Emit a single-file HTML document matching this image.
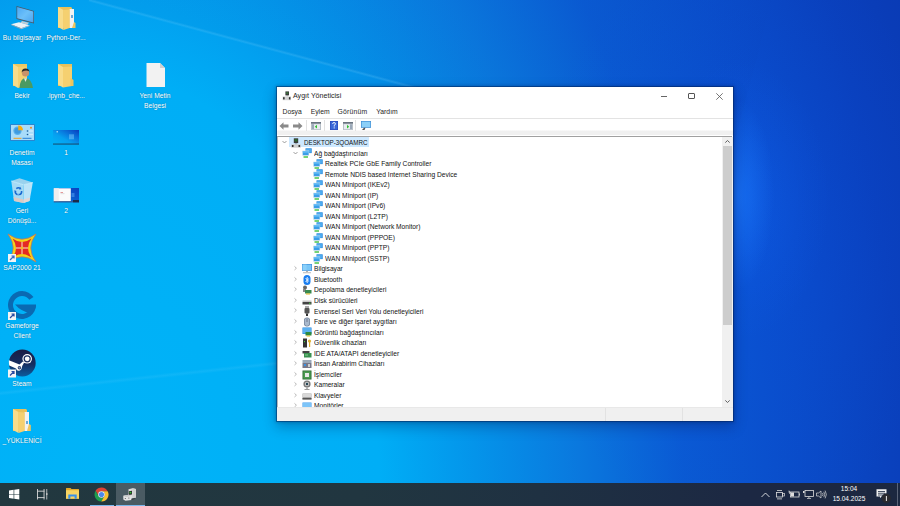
<!DOCTYPE html>
<html><head><meta charset="utf-8">
<style>
*{margin:0;padding:0;box-sizing:border-box}
html,body{width:900px;height:506px;overflow:hidden}
body{position:relative;font-family:"Liberation Sans",sans-serif;
background:
 radial-gradient(36px 95px at 738px 195px, rgba(30,125,255,.55), rgba(30,125,255,0)),
 radial-gradient(90px 140px at 740px 200px, rgba(20,110,255,.25), rgba(20,110,255,0)),
 radial-gradient(220px 300px at 740px 240px, rgba(10,80,240,.22), rgba(10,80,240,0)),
 radial-gradient(800px 1216px at 100px 500px, #00b4f8 0%, #00aef6 35%, #0494ea 47%, #0a78de 60%, #0a5ad2 73%, #0a4cc8 87.5%, #0a40bc 100%, #0a3ab4 110%);
}
#streak{position:absolute;left:89px;top:-400px;width:660px;height:400px;transform-origin:0 400px;transform:rotate(15.06deg);
background:linear-gradient(to top, rgba(0,30,110,.03) 0, rgba(0,30,110,.02) 80px, rgba(0,30,110,0) 200px)}
#streak2{position:absolute;left:89px;top:-2px;width:660px;height:4px;transform-origin:0 2px;transform:rotate(15.06deg);
background:linear-gradient(to bottom, rgba(130,215,255,0) 0, rgba(130,215,255,.2) 50%, rgba(130,215,255,0) 100%)}
#streak3{position:absolute;left:-10px;top:392px;width:300px;height:5px;transform-origin:0 2.5px;transform:rotate(-6.2deg);
background:linear-gradient(to bottom, rgba(160,225,255,0) 0, rgba(160,225,255,.09) 50%, rgba(160,225,255,0) 100%)}
.abs{position:absolute}
svg.abs{overflow:visible}
.lbl{position:absolute;color:#fff;font-size:6.7px;line-height:9.5px;text-align:center;white-space:nowrap;text-shadow:0 0 1.5px rgba(0,0,0,.35)}
.t{position:absolute;font-size:7.2px;color:#111;white-space:nowrap;line-height:11px;transform:scaleX(.925);transform-origin:0 0}
.m{position:absolute;font-size:6.8px;color:#1e1e1e;white-space:nowrap;line-height:10px}
#task{position:absolute;left:0;top:483px;width:900px;height:23px;background:linear-gradient(90deg,#22383f 0%,#213640 40%,#1f3142 60%,#1c2843 83%,#1c2840 100%)}
.tk{position:absolute;color:#fff;font-size:6.5px;line-height:8px;white-space:nowrap;text-align:center}
</style></head><body>

<div id="streak"></div><div id="streak2"></div><div id="streak3"></div>
<!-- ===== desktop icons ===== -->
<!-- Bu bilgisayar -->
<svg class="abs" style="left:10px;top:5px" width="26" height="26" viewBox="0 0 26 26">
 <defs><linearGradient id="gm" x1="0" y1="0" x2="1" y2="1"><stop offset="0" stop-color="#4aa8f4"/><stop offset=".5" stop-color="#6cc0fa"/><stop offset="1" stop-color="#4aa4f0"/></linearGradient></defs>
 <path d="M6.5 1 L24 6 L24 18.5 L6.5 14 Z" fill="#4a5866"/>
 <path d="M7.2 1.9 L23.3 6.6 L23.3 17.6 L7.2 13.3 Z" fill="url(#gm)"/>
 <path d="M12 16 L19 17.8 L17.5 19.5 L10.5 17.8 Z" fill="#c0ccd6"/>
 <path d="M1 19.2 L9 17.2 L19.5 20.2 L11.2 23.2 Z" fill="#eef2f5"/>
 <path d="M1 19.2 L11.2 23.2 L11.2 24.2 L1 20.1 Z" fill="#9aa6b0"/>
 <path d="M11.2 23.2 L19.5 20.2 L19.5 21 L11.2 24.2 Z" fill="#b8c2ca"/>
</svg>
<!-- folder generic (Python-Der) -->
<svg class="abs" style="left:57px;top:6px" width="19" height="24" viewBox="0 0 19 24">
 <path d="M1 1 L14 1 L15 2 L15 22 L1 22 Z" fill="#e9c15a"/>
 <rect x="12.5" y="3" width="4.5" height="19" fill="#f2f2f2"/>
 <rect x="14" y="9" width="2" height="3" fill="#6aa8d8"/>
 <path d="M1 1 L6.5 4 L6.5 24 L1 21 Z" fill="#f8dc8a"/>
 <path d="M6.5 4 L12.5 3.5 L12.5 22 L6.5 24 Z" fill="#f5d070"/>
 <path d="M17 16 L18.5 17 L18.5 22 L15 22 Z" fill="#eec45e"/>
</svg>
<!-- Bekir folder with person -->
<svg class="abs" style="left:12px;top:63px" width="22" height="26" viewBox="0 0 22 26">
 <path d="M1 1 L15 1 L15 23 L1 23 Z" fill="#edc862"/>
 <path d="M1 1 L6 4 L6 25 L1 22 Z" fill="#f8dc8a"/>
 <path d="M6 4 L15 3.5 L15 23 L6 25 Z" fill="#f5d070"/>
 <circle cx="13.5" cy="10" r="3.6" fill="#c8926a"/>
 <path d="M9.6 9.5 Q10 5.3 13.5 5.5 Q17.5 5.6 17.4 9.3 L16.8 8 Q14 6.5 10.5 8.6 Z" fill="#2a2a2a"/>
 <path d="M7.5 25 Q8 15.5 13.5 15 Q19.5 15.5 21 25 Z" fill="#4a9a62"/>
 <path d="M12 15.2 L13.5 19 L15 15.2 Z" fill="#e8e8e8"/>
</svg>
<!-- .ipynb folder -->
<svg class="abs" style="left:57px;top:63px" width="17" height="25" viewBox="0 0 17 25">
 <path d="M1 1 L15 1 L15 23 L1 23 Z" fill="#e9c15a"/>
 <path d="M1 1 L6 4 L6 24.5 L1 21.5 Z" fill="#f8dc8a"/>
 <path d="M6 4 L15 3.5 L15 23 L6 24.5 Z" fill="#f5d070"/>
 <path d="M13.5 15 L16.5 17 L16.5 23 L13.5 23 Z" fill="#eec45e"/>
</svg>
<!-- Yeni Metin Belgesi page -->
<svg class="abs" style="left:146px;top:62px" width="20" height="26" viewBox="0 0 20 26">
 <path d="M0.5 1 L14 1 L19 6 L19 25 L0.5 25 Z" fill="#f2f2f2"/>
 <path d="M14 1 L14 6 L19 6 Z" fill="#d0d0d0"/>
</svg>
<!-- Denetim Masası -->
<svg class="abs" style="left:9.5px;top:124px" width="25" height="17" viewBox="0 0 25 17">
 <rect x="0" y="0" width="25" height="17" rx=".8" fill="#2a86d0"/>
 <rect x="1" y="1" width="23" height="15" fill="#a8dcfa"/>
 <circle cx="7.5" cy="6.8" r="4.2" fill="#58b0ec"/>
 <circle cx="7.5" cy="6.8" r="3" fill="#3e9ae0"/>
 <path d="M8.2 6.2 L8.2 1.4 A5 5 0 0 1 13 6.2 Z" fill="#f8ac10"/>
 <circle cx="21" cy="3.8" r="1" fill="#f08a20"/>
 <circle cx="17.5" cy="7" r=".8" fill="#1a5a98"/><rect x="19" y="6.3" width="4" height="1.4" fill="#d0ecfc"/>
 <circle cx="17.5" cy="10.5" r=".8" fill="#1a5a98"/><rect x="19" y="9.8" width="4" height="1.4" fill="#d0ecfc"/>
 <rect x="3.5" y="13.8" width="8" height="1" fill="#f0a020"/>
 <rect x="12.5" y="13.8" width="9" height="1" fill="#2a80d8"/>
</svg>
<!-- 1 thumbnail -->
<svg class="abs" style="left:53px;top:130px" width="26" height="15" viewBox="0 0 26 15">
 <defs><linearGradient id="g1" x1="0" y1="1" x2="1" y2="0"><stop offset="0" stop-color="#00b4f8"/><stop offset=".4" stop-color="#06a0f0"/><stop offset=".72" stop-color="#0a6cd8"/><stop offset="1" stop-color="#0a3cbc"/></linearGradient></defs>
 <rect x="0" y="0" width="26" height="14.3" fill="url(#g1)"/>
 <rect x="0" y="13.6" width="26" height=".9" fill="#1a3a58"/>
 <rect x="16" y="4.3" width="5" height="5" fill="#8ad0ff" opacity=".45"/>
 <rect x="3.5" y="1" width="1.5" height="1.5" fill="#cfefff" opacity=".7"/>
</svg>
<!-- Recycle bin -->
<svg class="abs" style="left:8px;top:175px" width="28" height="30" viewBox="0 0 28 30">
 <path d="M3.3 6 L11.5 3.3 L24.8 7.5 L15.5 9.8 Z" fill="#9ad2ee"/>
 <path d="M3.3 6 L15.5 9.8 L15.5 28 L6 26 Z" fill="#a6daf4"/>
 <path d="M15.5 9.8 L24.8 7.5 L21.5 26 L15.5 28 Z" fill="#bce4f8"/>
 <path d="M3.3 6 L15.5 9.8 L24.8 7.5" stroke="#d8f2fc" stroke-width=".7" fill="none"/>
 <path d="M5.5 22 L15.5 24.5 L15.5 28 L6 26 Z" fill="#dccac4"/>
 <path d="M15.5 24.5 L22.2 22.5 L21.5 26 L15.5 28 Z" fill="#e4d6d2"/>
 <g stroke="#1a6ad0" stroke-width="1.5" fill="none">
  <path d="M8.3 13.6 A3.4 3.4 0 0 1 12.2 13.4"/>
  <path d="M13.6 16 A3.4 3.4 0 0 1 11.6 19.6"/>
  <path d="M9.6 19.8 A3.4 3.4 0 0 1 7.2 16.6"/>
 </g>
 <path d="M12 11.8 L13.6 14.2 L11 14.6 Z M12.8 19.8 L10.2 20.6 L10.8 18.4 Z M6.2 15.2 L7.2 18 L8.6 16 Z" fill="#1a6ad0"/>
</svg>
<!-- 2 thumbnail -->
<svg class="abs" style="left:53px;top:187.5px" width="26" height="15" viewBox="0 0 26 15">
 <defs><linearGradient id="g2" x1="0" y1="1" x2="1" y2="0"><stop offset="0" stop-color="#0a78dc"/><stop offset="1" stop-color="#0a40c0"/></linearGradient></defs>
 <rect x="0.8" y="0" width="25.2" height="14.3" fill="url(#g2)"/>
 <rect x="0.8" y="0.3" width="17" height="13" fill="#fbfbfb"/>
 <rect x="0.8" y="0.3" width="5" height="13" fill="#eeeeee"/>
 <rect x="7.5" y="4" width="2.5" height="1" fill="#e08080" opacity=".8"/>
 <rect x="7.5" y="5.5" width="4" height=".6" fill="#ccc"/>
 <rect x="18.5" y="5" width="3" height="4" fill="#5aaaf8" opacity=".5"/>
 <rect x="0.8" y="13.3" width="25.2" height="1" fill="#3a5a88"/>
 <rect x="20" y="12" width="6" height="2.3" fill="#1a2a48"/>
</svg>
<!-- SAP2000 -->
<svg class="abs" style="left:7px;top:233px" width="30" height="30" viewBox="0 0 30 30">
 <path d="M1 1 Q15 11.5 29 1 Q18.5 15 29 29 Q15 18.5 1 29 Q11.5 15 1 1 Z" fill="#f4d418" stroke="#e07040" stroke-width=".7"/>
 <path d="M5.5 5.5 Q15 12.5 24.5 5.5 Q17.5 15 24.5 24.5 Q15 17.5 5.5 24.5 Q12.5 15 5.5 5.5 Z" fill="#e42a24"/>
 <rect x="14.4" y="9" width="1.2" height="12" fill="#f8c8b0"/>
 <rect x="9" y="14.4" width="12" height="1.2" fill="#f8c8b0"/>
 <rect x="13.8" y="13.8" width="2.4" height="2.4" fill="#f0c020"/>
 <rect x="1" y="21" width="8" height="8" fill="#f4f4f4"/>
 <path d="M3 27 L7 23 M4.5 23 L7 23 L7 25.5" stroke="#3a6ac8" stroke-width="1.2" fill="none"/>
</svg>
<!-- Gameforge -->
<svg class="abs" style="left:7px;top:290px" width="31" height="31" viewBox="0 0 31 31">
 <path d="M26.47 6.97 A14 14 0 1 0 29 15 L24 15 A9 9 0 1 1 22.37 9.84 Z" fill="#0a6ab2"/>
 <path d="M8 14.6 L29 14.6 L29 16 Q28 21 23.5 23.5 Q14 21.5 8 14.6 Z" fill="#0a6ab2"/>
 <rect x="1" y="22" width="8" height="8" fill="#f4f4f4"/>
 <path d="M3 28 L7 24 M4.5 24 L7 24 L7 26.5" stroke="#2a4aa0" stroke-width="1.2" fill="none"/>
</svg>
<!-- Steam -->
<svg class="abs" style="left:8px;top:349px" width="29" height="29" viewBox="0 0 29 29">
 <defs><linearGradient id="gs" x1="0" y1="0" x2="0" y2="1"><stop offset="0" stop-color="#1a1c44"/><stop offset=".55" stop-color="#152e62"/><stop offset="1" stop-color="#0c5c9e"/></linearGradient></defs>
 <circle cx="14.3" cy="14" r="13.4" fill="url(#gs)"/>
 <path d="M0.9 11.2 L11.5 15.6 L14.8 12.6 L16.2 13.6 L14.2 17 Q13.8 21.6 10.6 21.8 Q8.6 21.8 8 19.6 L1.2 16.6 Q0.7 14 0.9 11.2 Z" fill="#fff"/>
 <circle cx="11.4" cy="18.8" r="1.7" fill="#15306a"/>
 <circle cx="11.4" cy="18.8" r="1" fill="#fff" opacity=".5"/>
 <circle cx="19.2" cy="9.8" r="4.8" fill="#fff"/>
 <circle cx="19.2" cy="9.8" r="3.6" fill="#152a5c"/>
 <circle cx="19.2" cy="9.8" r="2.4" fill="#fff"/>
 <rect x="0" y="20.5" width="8" height="8" fill="#f4f4f4"/>
 <path d="M2 26.5 L6 22.5 M3.5 22.5 L6 22.5 L6 25" stroke="#2a4aa0" stroke-width="1.2" fill="none"/>
</svg>
<!-- _YUKLENICI folder -->
<svg class="abs" style="left:12px;top:408px" width="20" height="26" viewBox="0 0 20 26">
 <path d="M1 1 L14 1 L15 2 L15 23 L1 23 Z" fill="#e9c15a"/>
 <rect x="12.5" y="4" width="4.5" height="19" fill="#f2f2f2"/>
 <rect x="14" y="13" width="2" height="3" fill="#6aa8d8"/>
 <path d="M1 1 L6.5 4 L6.5 25 L1 22 Z" fill="#f8dc8a"/>
 <path d="M6.5 4 L12.5 4.5 L12.5 23 L6.5 25 Z" fill="#f5d070"/>
 <path d="M17 16 L18.8 17 L18.8 23 L15 23 Z" fill="#eec45e"/>
</svg>

<!-- desktop labels -->
<div class="lbl" style="left:0;top:33px;width:44px">Bu bilgisayar</div>
<div class="lbl" style="left:44px;top:33px;width:44px">Python-Der...</div>
<div class="lbl" style="left:0;top:91px;width:44px">Bekir</div>
<div class="lbl" style="left:44px;top:91px;width:44px">.ipynb_che...</div>
<div class="lbl" style="left:133px;top:91px;width:44px">Yeni Metin<br>Belgesi</div>
<div class="lbl" style="left:0;top:148px;width:44px">Denetim<br>Masası</div>
<div class="lbl" style="left:44px;top:148px;width:44px">1</div>
<div class="lbl" style="left:0;top:206px;width:44px">Geri<br>Dönüşü...</div>
<div class="lbl" style="left:44px;top:206px;width:44px">2</div>
<div class="lbl" style="left:0;top:263px;width:44px">SAP2000 21</div>
<div class="lbl" style="left:0;top:321px;width:44px">Gameforge<br>Client</div>
<div class="lbl" style="left:0;top:379px;width:44px">Steam</div>
<div class="lbl" style="left:0;top:436px;width:44px">_YÜKLENİCİ</div>

<!-- ===== window ===== -->
<div class="abs" style="left:276px;top:86px;width:458px;height:336px;background:#fff;background-clip:padding-box;border:1px solid rgba(0,35,90,.45);box-shadow:0 0 3px rgba(0,20,70,.3),0 5px 12px rgba(0,20,70,.3)"></div>
<!-- title -->
<svg class="abs" style="left:281.5px;top:90.5px" width="9" height="10" viewBox="0 0 9 10">
 <rect x="3.4" y="0.4" width="3.6" height="4" fill="#3a3a3a"/><rect x="4.1" y="1.1" width="2.2" height="2" fill="#3a6a3a"/>
 <rect x="4.8" y="4.4" width=".8" height="1" fill="#777"/>
 <rect x="0.6" y="5.4" width="8.4" height="3.8" fill="#d4d4d4"/><rect x="1.1" y="6.2" width="1.5" height="2.2" fill="#2a2a2a"/><rect x="6.9" y="6.2" width="1.5" height="2.2" fill="#2a2a2a"/>
</svg>
<div class="m" style="left:293px;top:91.2px;font-size:7.1px">Aygıt Yöneticisi</div>
<div class="abs" style="left:661.2px;top:95.5px;width:6.2px;height:.7px;background:#666"></div>
<div class="abs" style="left:688.2px;top:93px;width:6.6px;height:6px;border:.75px solid #555;border-radius:1px"></div>
<svg class="abs" style="left:715.5px;top:92.5px" width="7" height="7" viewBox="0 0 7 7"><path d="M.3 .3 L6.7 6.7 M6.7 .3 L.3 6.7" stroke="#555" stroke-width=".8"/></svg>
<!-- menu -->
<div class="m" style="left:282.5px;top:106.5px">Dosya</div>
<div class="m" style="left:310.7px;top:106.5px">Eylem</div>
<div class="m" style="left:337.6px;top:106.5px;letter-spacing:.2px">Görünüm</div>
<div class="m" style="left:376.3px;top:106.5px">Yardım</div>
<div class="abs" style="left:277px;top:118px;width:456px;height:1px;background:#e3e3e3"></div>
<!-- toolbar -->
<div class="abs" style="left:277px;top:119px;width:456px;height:16px;background:linear-gradient(#fff 0,#fff 11px,#f0f0f0 12px,#f0f0f0 16px)"></div>
<div class="abs" style="left:277px;top:135.5px;width:455px;height:1.4px;background:#a0a0a0"></div>
<div class="abs" style="left:277px;top:136.5px;width:1px;height:271px;background:#b8b8b8"></div>
<svg class="abs" style="left:279px;top:121px" width="25" height="10" viewBox="0 0 25 10">
 <path d="M0.5 5 L4.5 1.2 L4.5 3.4 L9.5 3.4 L9.5 6.6 L4.5 6.6 L4.5 8.8 Z" fill="#8a8a8a"/>
 <path d="M23.5 5 L19.5 1.2 L19.5 3.4 L14 3.4 L14 6.6 L19.5 6.6 L19.5 8.8 Z" fill="#8a8a8a"/>
</svg>
<div class="abs" style="left:305.5px;top:120px;width:1px;height:11px;background:#e2e2e2"></div>
<div class="abs" style="left:323.5px;top:120px;width:1px;height:11px;background:#e2e2e2"></div>
<div class="abs" style="left:354.5px;top:120px;width:1px;height:11px;background:#e2e2e2"></div>
<svg class="abs" style="left:311px;top:122px" width="10" height="8" viewBox="0 0 10 8">
 <rect x="0" y="0" width="10" height="8" fill="#b8c0c8"/><rect x="0" y="0" width="10" height="1.6" fill="#6a7480"/>
 <rect x="1" y="2.2" width="8" height="5" fill="#e8ecf0"/><rect x="1" y="2.2" width="2" height="5" fill="#9aa8b8"/>
 <path d="M3.8 4.7 L6 2.8 L6 6.6 Z" fill="#30c030"/>
</svg>
<svg class="abs" style="left:330px;top:121px" width="8" height="9" viewBox="0 0 8 9">
 <rect x="0" y="0" width="8" height="9" fill="#2a48b8"/><rect x="0.6" y="0.6" width="6.8" height="7.8" fill="#3a68d8"/>
 <path d="M2.6 3 Q2.8 1.5 4 1.5 Q5.4 1.5 5.4 2.9 Q5.4 3.8 4.2 4.4 L4.2 5.6" stroke="#fff" stroke-width=".9" fill="none"/><rect x="3.7" y="6.4" width="1" height="1" fill="#fff"/>
</svg>
<svg class="abs" style="left:342.5px;top:122px" width="10" height="8" viewBox="0 0 10 8">
 <rect x="0" y="0" width="10" height="8" fill="#b8c0c8"/><rect x="0" y="0" width="10" height="1.6" fill="#6a7480"/>
 <rect x="1" y="2.2" width="8" height="5" fill="#e8ecf0"/><rect x="7" y="2.2" width="2" height="5" fill="#9aa8b8"/>
 <path d="M6.2 4.7 L4 2.8 L4 6.6 Z" fill="#30c030"/>
</svg>
<svg class="abs" style="left:361px;top:121px" width="10" height="9" viewBox="0 0 10 9">
 <rect x="0" y="0" width="10" height="6.8" fill="#3a88d0"/><rect x="0.6" y="0.6" width="8.8" height="5.6" fill="#8cd0f8"/>
 <path d="M3 6.8 L1 9 L3.5 9 L4.5 6.8 Z" fill="#555"/>
</svg>
<!-- selection -->
<div class="abs" style="left:289px;top:137px;width:79.5px;height:10px;background:#cce8ff"></div>
<!-- tree -->
<svg class="abs" style="left:281.5px;top:140.1px" width="5" height="4" viewBox="0 0 5 4"><path d="M0.5 1 L2.5 3 L4.5 1" stroke="#777" stroke-width=".7" fill="none"/></svg>
<svg class="abs" style="left:290.5px;top:137.8px" width="10" height="10" viewBox="0 0 10 10"><rect x="2.8" y="0.3" width="4.4" height="4.8" fill="#3c3c3c"/><rect x="3.6" y="1.1" width="2.8" height="2.4" fill="#2c6a30"/><rect x="4.6" y="5.1" width=".8" height="1.4" fill="#666"/><rect x="0.3" y="6.3" width="9.4" height="3.4" fill="#cfcfcf"/><rect x="0.9" y="7" width="1.6" height="2" fill="#333"/><rect x="7.5" y="7" width="1.6" height="2" fill="#333"/></svg>
<div class="t" style="left:303.5px;top:137.0px;transform:scaleX(.87)">DESKTOP-3QOAMRC</div>
<svg class="abs" style="left:292.5px;top:150.635px" width="5" height="4" viewBox="0 0 5 4"><path d="M0.5 1 L2.5 3 L4.5 1" stroke="#777" stroke-width=".7" fill="none"/></svg>
<svg class="abs" style="left:301.5px;top:148.33px" width="10" height="10" viewBox="0 0 10 10"><rect x="3.5" y="0.3" width="6.2" height="4.8" fill="#2a88d8"/><rect x="4" y="0.8" width="5.2" height="3.8" fill="#4aaaf0"/><rect x="0.3" y="2.6" width="6.8" height="5.4" fill="#d8e4ec"/><rect x="0.8" y="3.1" width="5.8" height="4" fill="#3a9ee8"/><rect x="0.8" y="3.1" width="5.8" height="1.5" fill="#6cc0f8"/><rect x="1.5" y="8.3" width="4.5" height="1.4" fill="#3cc03c"/></svg>
<div class="t" style="left:314.3px;top:147.53px">Ağ bağdaştırıcıları</div>
<svg class="abs" style="left:312.5px;top:158.87px" width="10" height="10" viewBox="0 0 10 10"><rect x="3.5" y="0.3" width="6.2" height="4.8" fill="#2a88d8"/><rect x="4" y="0.8" width="5.2" height="3.8" fill="#4aaaf0"/><rect x="0.3" y="2.6" width="6.8" height="5.4" fill="#d8e4ec"/><rect x="0.8" y="3.1" width="5.8" height="4" fill="#3a9ee8"/><rect x="0.8" y="3.1" width="5.8" height="1.5" fill="#6cc0f8"/><rect x="1.5" y="8.3" width="4.5" height="1.4" fill="#3cc03c"/></svg>
<div class="t" style="left:324.8px;top:158.07px">Realtek PCIe GbE Family Controller</div>
<svg class="abs" style="left:312.5px;top:169.4px" width="10" height="10" viewBox="0 0 10 10"><rect x="3.5" y="0.3" width="6.2" height="4.8" fill="#2a88d8"/><rect x="4" y="0.8" width="5.2" height="3.8" fill="#4aaaf0"/><rect x="0.3" y="2.6" width="6.8" height="5.4" fill="#d8e4ec"/><rect x="0.8" y="3.1" width="5.8" height="4" fill="#3a9ee8"/><rect x="0.8" y="3.1" width="5.8" height="1.5" fill="#6cc0f8"/><rect x="1.5" y="8.3" width="4.5" height="1.4" fill="#3cc03c"/></svg>
<div class="t" style="left:324.8px;top:168.6px">Remote NDIS based Internet Sharing Device</div>
<svg class="abs" style="left:312.5px;top:179.94px" width="10" height="10" viewBox="0 0 10 10"><rect x="3.5" y="0.3" width="6.2" height="4.8" fill="#2a88d8"/><rect x="4" y="0.8" width="5.2" height="3.8" fill="#4aaaf0"/><rect x="0.3" y="2.6" width="6.8" height="5.4" fill="#d8e4ec"/><rect x="0.8" y="3.1" width="5.8" height="4" fill="#3a9ee8"/><rect x="0.8" y="3.1" width="5.8" height="1.5" fill="#6cc0f8"/><rect x="1.5" y="8.3" width="4.5" height="1.4" fill="#3cc03c"/></svg>
<div class="t" style="left:324.8px;top:179.14px">WAN Miniport (IKEv2)</div>
<svg class="abs" style="left:312.5px;top:190.47px" width="10" height="10" viewBox="0 0 10 10"><rect x="3.5" y="0.3" width="6.2" height="4.8" fill="#2a88d8"/><rect x="4" y="0.8" width="5.2" height="3.8" fill="#4aaaf0"/><rect x="0.3" y="2.6" width="6.8" height="5.4" fill="#d8e4ec"/><rect x="0.8" y="3.1" width="5.8" height="4" fill="#3a9ee8"/><rect x="0.8" y="3.1" width="5.8" height="1.5" fill="#6cc0f8"/><rect x="1.5" y="8.3" width="4.5" height="1.4" fill="#3cc03c"/></svg>
<div class="t" style="left:324.8px;top:189.67px">WAN Miniport (IP)</div>
<svg class="abs" style="left:312.5px;top:201.01px" width="10" height="10" viewBox="0 0 10 10"><rect x="3.5" y="0.3" width="6.2" height="4.8" fill="#2a88d8"/><rect x="4" y="0.8" width="5.2" height="3.8" fill="#4aaaf0"/><rect x="0.3" y="2.6" width="6.8" height="5.4" fill="#d8e4ec"/><rect x="0.8" y="3.1" width="5.8" height="4" fill="#3a9ee8"/><rect x="0.8" y="3.1" width="5.8" height="1.5" fill="#6cc0f8"/><rect x="1.5" y="8.3" width="4.5" height="1.4" fill="#3cc03c"/></svg>
<div class="t" style="left:324.8px;top:200.21px">WAN Miniport (IPv6)</div>
<svg class="abs" style="left:312.5px;top:211.54px" width="10" height="10" viewBox="0 0 10 10"><rect x="3.5" y="0.3" width="6.2" height="4.8" fill="#2a88d8"/><rect x="4" y="0.8" width="5.2" height="3.8" fill="#4aaaf0"/><rect x="0.3" y="2.6" width="6.8" height="5.4" fill="#d8e4ec"/><rect x="0.8" y="3.1" width="5.8" height="4" fill="#3a9ee8"/><rect x="0.8" y="3.1" width="5.8" height="1.5" fill="#6cc0f8"/><rect x="1.5" y="8.3" width="4.5" height="1.4" fill="#3cc03c"/></svg>
<div class="t" style="left:324.8px;top:210.75px">WAN Miniport (L2TP)</div>
<svg class="abs" style="left:312.5px;top:222.08px" width="10" height="10" viewBox="0 0 10 10"><rect x="3.5" y="0.3" width="6.2" height="4.8" fill="#2a88d8"/><rect x="4" y="0.8" width="5.2" height="3.8" fill="#4aaaf0"/><rect x="0.3" y="2.6" width="6.8" height="5.4" fill="#d8e4ec"/><rect x="0.8" y="3.1" width="5.8" height="4" fill="#3a9ee8"/><rect x="0.8" y="3.1" width="5.8" height="1.5" fill="#6cc0f8"/><rect x="1.5" y="8.3" width="4.5" height="1.4" fill="#3cc03c"/></svg>
<div class="t" style="left:324.8px;top:221.28px">WAN Miniport (Network Monitor)</div>
<svg class="abs" style="left:312.5px;top:232.61px" width="10" height="10" viewBox="0 0 10 10"><rect x="3.5" y="0.3" width="6.2" height="4.8" fill="#2a88d8"/><rect x="4" y="0.8" width="5.2" height="3.8" fill="#4aaaf0"/><rect x="0.3" y="2.6" width="6.8" height="5.4" fill="#d8e4ec"/><rect x="0.8" y="3.1" width="5.8" height="4" fill="#3a9ee8"/><rect x="0.8" y="3.1" width="5.8" height="1.5" fill="#6cc0f8"/><rect x="1.5" y="8.3" width="4.5" height="1.4" fill="#3cc03c"/></svg>
<div class="t" style="left:324.8px;top:231.81px">WAN Miniport (PPPOE)</div>
<svg class="abs" style="left:312.5px;top:243.15px" width="10" height="10" viewBox="0 0 10 10"><rect x="3.5" y="0.3" width="6.2" height="4.8" fill="#2a88d8"/><rect x="4" y="0.8" width="5.2" height="3.8" fill="#4aaaf0"/><rect x="0.3" y="2.6" width="6.8" height="5.4" fill="#d8e4ec"/><rect x="0.8" y="3.1" width="5.8" height="4" fill="#3a9ee8"/><rect x="0.8" y="3.1" width="5.8" height="1.5" fill="#6cc0f8"/><rect x="1.5" y="8.3" width="4.5" height="1.4" fill="#3cc03c"/></svg>
<div class="t" style="left:324.8px;top:242.35px">WAN Miniport (PPTP)</div>
<svg class="abs" style="left:312.5px;top:253.69px" width="10" height="10" viewBox="0 0 10 10"><rect x="3.5" y="0.3" width="6.2" height="4.8" fill="#2a88d8"/><rect x="4" y="0.8" width="5.2" height="3.8" fill="#4aaaf0"/><rect x="0.3" y="2.6" width="6.8" height="5.4" fill="#d8e4ec"/><rect x="0.8" y="3.1" width="5.8" height="4" fill="#3a9ee8"/><rect x="0.8" y="3.1" width="5.8" height="1.5" fill="#6cc0f8"/><rect x="1.5" y="8.3" width="4.5" height="1.4" fill="#3cc03c"/></svg>
<div class="t" style="left:324.8px;top:252.89px">WAN Miniport (SSTP)</div>
<svg class="abs" style="left:293.8px;top:266.32px" width="3" height="4.4" viewBox="0 0 3 4.4"><path d="M.5 .4 L2.4 2.2 L.5 4" stroke="#a0a0a0" stroke-width=".75" fill="none"/></svg>
<svg class="abs" style="left:301.5px;top:264.22px" width="10" height="10" viewBox="0 0 10 10"><rect x="0" y="0" width="10" height="6.8" fill="#3a8ad8"/><rect x=".6" y=".6" width="8.8" height="5.6" fill="#78c6f8"/><rect x=".6" y=".6" width="4" height="5.6" fill="#8ad0fa"/><rect x="4" y="6.8" width="2" height="1.2" fill="#b0b0b0"/><rect x="1" y="8" width="8" height="1.3" fill="#c8c8c8"/></svg>
<div class="t" style="left:314.3px;top:263.42px">Bilgisayar</div>
<svg class="abs" style="left:293.8px;top:276.86px" width="3" height="4.4" viewBox="0 0 3 4.4"><path d="M.5 .4 L2.4 2.2 L.5 4" stroke="#a0a0a0" stroke-width=".75" fill="none"/></svg>
<svg class="abs" style="left:301.5px;top:274.75px" width="10" height="10" viewBox="0 0 10 10"><rect x="1.5" y="0" width="7" height="10" rx="3.5" fill="#1a7ef0"/><path d="M3.5 3 L6.5 6.2 L5 7.6 V2.4 L6.5 3.8 L3.5 7" stroke="#fff" stroke-width=".8" fill="none"/></svg>
<div class="t" style="left:314.3px;top:273.95px">Bluetooth</div>
<svg class="abs" style="left:293.8px;top:287.39px" width="3" height="4.4" viewBox="0 0 3 4.4"><path d="M.5 .4 L2.4 2.2 L.5 4" stroke="#a0a0a0" stroke-width=".75" fill="none"/></svg>
<svg class="abs" style="left:301.5px;top:285.29px" width="10" height="10" viewBox="0 0 10 10"><circle cx="3" cy="2.5" r="2" fill="#666"/><rect x="1" y="4" width="3" height="3" fill="#888"/><rect x="3" y="5" width="6.5" height="3.5" fill="#3a8a50"/><rect x="4" y="8.5" width="4" height="1" fill="#e8b820"/></svg>
<div class="t" style="left:314.3px;top:284.49px">Depolama denetleyicileri</div>
<svg class="abs" style="left:293.8px;top:297.93px" width="3" height="4.4" viewBox="0 0 3 4.4"><path d="M.5 .4 L2.4 2.2 L.5 4" stroke="#a0a0a0" stroke-width=".75" fill="none"/></svg>
<svg class="abs" style="left:301.5px;top:295.82px" width="10" height="10" viewBox="0 0 10 10"><rect x="0.5" y="4.5" width="9" height="1.5" fill="#c8c8c8"/><rect x="0.5" y="6" width="9" height="2.5" fill="#444"/><rect x="7" y="6.8" width="1.5" height="1" fill="#4c4"/></svg>
<div class="t" style="left:314.3px;top:295.02px">Disk sürücüleri</div>
<svg class="abs" style="left:293.8px;top:308.46px" width="3" height="4.4" viewBox="0 0 3 4.4"><path d="M.5 .4 L2.4 2.2 L.5 4" stroke="#a0a0a0" stroke-width=".75" fill="none"/></svg>
<svg class="abs" style="left:301.5px;top:306.36px" width="10" height="10" viewBox="0 0 10 10"><rect x="3" y="0" width="4" height="2" fill="#aaa"/><rect x="2.5" y="2" width="5" height="5.5" rx="1" fill="#555"/><rect x="4" y="7.5" width="2" height="2.5" fill="#333"/></svg>
<div class="t" style="left:314.3px;top:305.56px">Evrensel Seri Veri Yolu denetleyicileri</div>
<svg class="abs" style="left:293.8px;top:319.0px" width="3" height="4.4" viewBox="0 0 3 4.4"><path d="M.5 .4 L2.4 2.2 L.5 4" stroke="#a0a0a0" stroke-width=".75" fill="none"/></svg>
<svg class="abs" style="left:301.5px;top:316.89px" width="10" height="10" viewBox="0 0 10 10"><rect x="2" y="0.5" width="6" height="9" rx="3" fill="#6a7a90"/><rect x="2.6" y="1.1" width="4.8" height="7.8" rx="2.4" fill="#a8b8cc"/><rect x="4.7" y="1.5" width=".6" height="3.5" fill="#556"/></svg>
<div class="t" style="left:314.3px;top:316.09px">Fare ve diğer işaret aygıtları</div>
<svg class="abs" style="left:293.8px;top:329.53px" width="3" height="4.4" viewBox="0 0 3 4.4"><path d="M.5 .4 L2.4 2.2 L.5 4" stroke="#a0a0a0" stroke-width=".75" fill="none"/></svg>
<svg class="abs" style="left:301.5px;top:327.43px" width="10" height="10" viewBox="0 0 10 10"><rect x="0.5" y="0.5" width="9" height="6.5" fill="#1a80e0"/><rect x="1" y="1" width="8" height="5.5" fill="#5ab0f0"/><rect x="3.5" y="5" width="6" height="3.5" fill="#2e8a40"/><rect x="4.5" y="8.5" width="3.5" height="1" fill="#e8b820"/></svg>
<div class="t" style="left:314.3px;top:326.63px">Görüntü bağdaştırıcıları</div>
<svg class="abs" style="left:293.8px;top:340.06px" width="3" height="4.4" viewBox="0 0 3 4.4"><path d="M.5 .4 L2.4 2.2 L.5 4" stroke="#a0a0a0" stroke-width=".75" fill="none"/></svg>
<svg class="abs" style="left:301.5px;top:337.96px" width="10" height="10" viewBox="0 0 10 10"><rect x="1" y="0.5" width="4" height="9" fill="#333"/><rect x="2" y="3" width="1" height="1.2" fill="#4c4"/><circle cx="7.5" cy="3" r="1.6" fill="#e0b030"/><rect x="7" y="4" width="1.2" height="5" fill="#e0b030"/></svg>
<div class="t" style="left:314.3px;top:337.16px">Güvenlik cihazları</div>
<svg class="abs" style="left:293.8px;top:350.6px" width="3" height="4.4" viewBox="0 0 3 4.4"><path d="M.5 .4 L2.4 2.2 L.5 4" stroke="#a0a0a0" stroke-width=".75" fill="none"/></svg>
<svg class="abs" style="left:301.5px;top:348.5px" width="10" height="10" viewBox="0 0 10 10"><rect x="0.5" y="2" width="7" height="2.5" fill="#444"/><rect x="2" y="4" width="7.5" height="4.5" fill="#3a9050"/><rect x="3" y="5" width="3" height="2" fill="#60b070"/></svg>
<div class="t" style="left:314.3px;top:347.7px">IDE ATA/ATAPI denetleyiciler</div>
<svg class="abs" style="left:293.8px;top:361.14px" width="3" height="4.4" viewBox="0 0 3 4.4"><path d="M.5 .4 L2.4 2.2 L.5 4" stroke="#a0a0a0" stroke-width=".75" fill="none"/></svg>
<svg class="abs" style="left:301.5px;top:359.04px" width="10" height="10" viewBox="0 0 10 10"><rect x="0.5" y="1" width="9" height="3" fill="#9aa8b8"/><rect x="0.5" y="4" width="9" height="5" fill="#778"/><rect x="2" y="5" width="2" height="2" fill="#3a90e0"/><rect x="6" y="5" width="2" height="3" fill="#ccc"/></svg>
<div class="t" style="left:314.3px;top:358.24px">İnsan Arabirim Cihazları</div>
<svg class="abs" style="left:293.8px;top:371.67px" width="3" height="4.4" viewBox="0 0 3 4.4"><path d="M.5 .4 L2.4 2.2 L.5 4" stroke="#a0a0a0" stroke-width=".75" fill="none"/></svg>
<svg class="abs" style="left:301.5px;top:369.57px" width="10" height="10" viewBox="0 0 10 10"><rect x="0.5" y="0.5" width="9" height="9" fill="#2a6a30"/><rect x="1.3" y="1.3" width="7.4" height="7.4" fill="#4a9a50"/><rect x="3" y="3" width="4" height="4" fill="#e8e8e8"/></svg>
<div class="t" style="left:314.3px;top:368.77px">İşlemciler</div>
<svg class="abs" style="left:293.8px;top:382.2px" width="3" height="4.4" viewBox="0 0 3 4.4"><path d="M.5 .4 L2.4 2.2 L.5 4" stroke="#a0a0a0" stroke-width=".75" fill="none"/></svg>
<svg class="abs" style="left:301.5px;top:380.1px" width="10" height="10" viewBox="0 0 10 10"><circle cx="5" cy="4" r="3.6" fill="#777"/><circle cx="5" cy="4" r="2.2" fill="#ccc"/><circle cx="5" cy="4" r="1.2" fill="#245"/><rect x="4.5" y="7.5" width="1" height="1.5" fill="#777"/><rect x="2.5" y="9" width="5" height="1" fill="#999"/></svg>
<div class="t" style="left:314.3px;top:379.3px">Kameralar</div>
<svg class="abs" style="left:293.8px;top:392.74px" width="3" height="4.4" viewBox="0 0 3 4.4"><path d="M.5 .4 L2.4 2.2 L.5 4" stroke="#a0a0a0" stroke-width=".75" fill="none"/></svg>
<svg class="abs" style="left:301.5px;top:390.64px" width="10" height="10" viewBox="0 0 10 10"><rect x="0.5" y="2.5" width="9" height="6" fill="#a8a8a8"/><rect x="1" y="3" width="8" height="3" fill="#d8d8d8"/><rect x="0.5" y="7" width="9" height="1.5" fill="#555"/></svg>
<div class="t" style="left:314.3px;top:389.84px">Klavyeler</div>
<svg class="abs" style="left:293.8px;top:403.28px" width="3" height="4.4" viewBox="0 0 3 4.4"><path d="M.5 .4 L2.4 2.2 L.5 4" stroke="#a0a0a0" stroke-width=".75" fill="none"/></svg>
<svg class="abs" style="left:301.5px;top:401.18px" width="10" height="10" viewBox="0 0 10 10"><rect x="0.5" y="1.5" width="9" height="7" fill="#3a98ee"/><rect x="1" y="2" width="8" height="6" fill="#7cc4f8"/></svg>
<div class="t" style="left:314.3px;top:400.38px">Monitörler</div>
<!-- scrollbar -->
<div class="abs" style="left:722px;top:137px;width:10.5px;height:270px;background:#f0f0f0"></div>
<div class="abs" style="left:722.5px;top:146.3px;width:9px;height:178.5px;background:#cdcdcd"></div>
<svg class="abs" style="left:725px;top:140.3px" width="5" height="3" viewBox="0 0 5 3"><path d="M.3 2.6 L2.5 .5 L4.7 2.6" stroke="#606060" stroke-width="1" fill="none"/></svg>
<svg class="abs" style="left:725px;top:400px" width="5" height="3" viewBox="0 0 5 3"><path d="M.3 .4 L2.5 2.5 L4.7 .4" stroke="#606060" stroke-width="1" fill="none"/></svg>
<!-- status bar -->
<div class="abs" style="left:277px;top:407px;width:456px;height:14px;background:#f0f0f0;border-top:1px solid #e8e8e8"></div>
<div class="abs" style="left:604.5px;top:408px;width:1px;height:13px;background:#e2e2e2"></div>
<div class="abs" style="left:681.5px;top:408px;width:1px;height:13px;background:#e2e2e2"></div>

<!-- ===== taskbar ===== -->
<div id="task"></div>
<svg class="abs" style="left:8.7px;top:488.9px" width="11" height="11" viewBox="0 0 11 11">
 <path d="M0 1.5 L4.6 .85 L4.6 4.95 L0 4.95 Z M5.25 .75 L10.3 0 L10.3 4.95 L5.25 4.95 Z M0 5.6 L4.6 5.6 L4.6 9.7 L0 9.05 Z M5.25 5.6 L10.3 5.6 L10.3 10.5 L5.25 9.8 Z" fill="#fff"/>
</svg>
<svg class="abs" style="left:36.8px;top:488.8px" width="11" height="11" viewBox="0 0 11 11">
 <g fill="#d8d8d8">
 <rect x="0" y="0" width=".9" height="10.5"/><rect x="6.6" y="0" width=".9" height="10.5"/>
 <rect x="0" y="1.7" width="7.5" height=".9"/><rect x="0" y="8.2" width="7.5" height=".9"/>
 <rect x="9.4" y="0" width=".8" height="10.5"/><rect x="9.1" y="4.3" width="1.4" height="1.5"/>
 </g>
</svg>
<svg class="abs" style="left:65.8px;top:488.2px" width="13" height="11" viewBox="0 0 13 11">
 <path d="M0 0.5 Q0 0 .5 0 L4.5 0 L5.5 1 L12.5 1 Q13 1 13 1.5 L13 10.7 L0 10.7 Z" fill="#e4a826"/>
 <rect x="0" y="2.2" width="13" height="8.5" fill="#f8d462"/>
 <path d="M2.3 10.7 L2.3 6.4 L10.7 6.4 L10.7 10.7 L8.6 10.7 L8.6 8.4 L4.4 8.4 L4.4 10.7 Z" fill="#3a90e8"/>
</svg>
<svg class="abs" style="left:94px;top:486.5px" width="15" height="15" viewBox="0 0 15 15">
 <path d="M13.673 4.2 A7 7 0 0 0 1.5555 3.804 L4.642 9.15 A3.3 3.3 0 0 1 7.5 4.2 Z" fill="#db4437"/>
 <path d="M1.5555 3.804 A7 7 0 0 0 7.27 14.496 L10.358 9.15 A3.3 3.3 0 0 1 4.642 9.15 Z" fill="#1e9e4e"/>
 <path d="M7.27 14.496 A7 7 0 0 0 13.673 4.2 L7.5 4.2 A3.3 3.3 0 0 1 10.358 9.15 Z" fill="#f8c030"/>
 <circle cx="7.5" cy="7.5" r="3.3" fill="#f4f4f4"/>
 <circle cx="7.5" cy="7.5" r="2.55" fill="#4a88ec"/>
</svg>
<div class="abs" style="left:116px;top:483px;width:29px;height:23px;background:#4a5b63"></div>
<svg class="abs" style="left:123px;top:488px" width="14" height="13" viewBox="0 0 14 13">
 <path d="M5.5 1.2 L9.5 0.3 L13 1 L13 9.5 L8 10.5 L5.5 9.5 Z" fill="#dcdcdc"/>
 <path d="M9.5 0.3 L13 1 L13 9.5 L9.5 9.8 Z" fill="#cfcfcf"/>
 <path d="M5.8 3.2 L9 2.8 L9 6.5 L5.8 7 Z" fill="#2a2a2a"/>
 <rect x="6.5" y="3.8" width="1.8" height="1.6" fill="#30c030"/>
 <path d="M0.3 7.8 L6 6.8 L8.5 8 L8.5 12 L2.5 12.8 L0.3 11.6 Z" fill="#e4e4e4"/>
 <path d="M0.3 7.8 L6 6.8 L8.5 8 L2.8 9 Z" fill="#c8c8c8"/>
 <rect x="1.8" y="10" width="1.2" height="1" fill="#777"/><rect x="5.2" y="9.6" width="1.2" height="1" fill="#777"/>
 <path d="M8.5 11 L12 10.2 L12.5 10.8 L8.5 12 Z" fill="#333"/>
</svg>
<div class="abs" style="left:89.5px;top:504.5px;width:24px;height:1.5px;background:#7ab8ee"></div>
<div class="abs" style="left:116px;top:504.5px;width:29px;height:1.5px;background:#7ab8ee"></div>
<!-- tray -->
<svg class="abs" style="left:761px;top:491.5px" width="9" height="6" viewBox="0 0 9 6"><path d="M.5 5 L4.5 1 L8.5 5" stroke="#fff" stroke-width=".8" fill="none"/></svg>
<svg class="abs" style="left:775.5px;top:489.5px" width="9" height="10" viewBox="0 0 9 10">
 <rect x="1" y="0" width="5" height=".8" fill="#ddd"/>
 <rect x=".5" y="2.5" width="6" height="4.5" fill="none" stroke="#ddd" stroke-width=".8"/>
 <rect x="6.5" y="3.5" width="2" height="2.5" fill="none" stroke="#ddd" stroke-width=".7"/>
 <rect x="1" y="8.5" width="5" height=".8" fill="#ddd"/>
</svg>
<svg class="abs" style="left:788px;top:491px" width="12" height="7" viewBox="0 0 12 7">
 <rect x="2.5" y="1" width="8.5" height="5" fill="none" stroke="#ddd" stroke-width=".8"/>
 <rect x="11" y="2.5" width=".8" height="2" fill="#ddd"/>
 <rect x="3" y="1.5" width="3" height="4" fill="#ddd"/>
 <path d="M.5 0 L1.5 0 L1.5 3 M.3 1 L2 1" stroke="#ddd" stroke-width=".6" fill="none"/>
</svg>
<svg class="abs" style="left:802.5px;top:490px" width="11" height="9" viewBox="0 0 11 9">
 <rect x="2" y=".5" width="8.5" height="6" fill="none" stroke="#ddd" stroke-width=".8"/>
 <rect x="5.5" y="6.5" width=".8" height="1.5" fill="#ddd"/><rect x="4" y="8" width="4" height=".7" fill="#ddd"/>
 <rect x="0" y="1" width="1.5" height="2" fill="#ddd"/>
</svg>
<svg class="abs" style="left:816px;top:490px" width="11" height="9" viewBox="0 0 11 9">
 <path d="M.5 3 L2.5 3 L5 1 L5 8 L2.5 6 L.5 6 Z" fill="none" stroke="#ddd" stroke-width=".7"/>
 <path d="M6.5 3 Q7.5 4.5 6.5 6 M7.8 1.8 Q9.6 4.5 7.8 7.2 M9.1 .6 Q11.6 4.5 9.1 8.4" stroke="#ddd" stroke-width=".7" fill="none"/>
</svg>
<div class="tk" style="left:830px;top:485px;width:38px">15:04</div>
<div class="tk" style="left:830px;top:495px;width:38px">15.04.2025</div>
<svg class="abs" style="left:875.5px;top:489px" width="16" height="16" viewBox="0 0 16 16">
 <path d="M.5 .3 L10.5 .3 L10.5 7.5 L6 7.5 L4 9 L4 7.5 L.5 7.5 Z" fill="#f0f0f0"/>
 <rect x="2" y="2" width="7" height=".8" fill="#1c2840"/><rect x="2" y="3.8" width="7" height=".8" fill="#1c2840"/><rect x="2" y="5.6" width="5" height=".8" fill="#1c2840"/>
 <circle cx="10.3" cy="9.4" r="4.8" fill="#2a2a2e" stroke="#1c2840" stroke-width=".6"/>
 <rect x="9.9" y="7" width=".9" height="5" fill="#fff"/>
</svg>
<div class="abs" style="left:897px;top:483px;width:1px;height:23px;background:#5a6478"></div>

</body></html>
